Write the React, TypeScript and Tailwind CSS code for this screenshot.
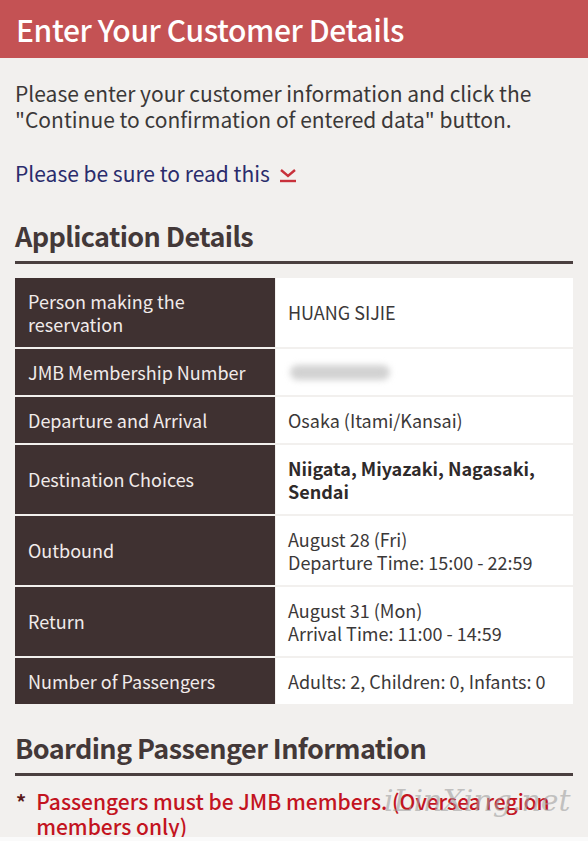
import React from "react";

const font = { fontFamily: '"Noto Sans CJK JP", "Noto Sans", sans-serif' };

const rows: { label: string; value: React.ReactNode; tall?: boolean }[] = [
  { label: "Person making the reservation", value: "HUANG SIJIE", tall: true },
  {
    label: "JMB Membership Number",
    value: (
      <div className="relative h-[22px] w-[110px]">
        <div className="absolute left-[2px] top-[4px] h-[15px] w-[100px] rounded-full bg-[#d2d2d2] blur-[3px]" />
      </div>
    ),
  },
  { label: "Departure and Arrival", value: "Osaka (Itami/Kansai)" },
  {
    label: "Destination Choices",
    value: <span className="font-bold text-[#2f2a2a]">Niigata, Miyazaki, Nagasaki, Sendai</span>,
    tall: true,
  },
  {
    label: "Outbound",
    value: (
      <>
        August 28 (Fri)
        <br />
        Departure Time: 15:00 - 22:59
      </>
    ),
    tall: true,
  },
  {
    label: "Return",
    value: (
      <>
        August 31 (Mon)
        <br />
        Arrival Time: 11:00 - 14:59
      </>
    ),
    tall: true,
  },
  { label: "Number of Passengers", value: "Adults: 2, Children: 0, Infants: 0" },
];

export default function App() {
  return (
    <div className="w-[588px] h-[841px] overflow-hidden bg-[#f2f0ee] flex flex-col" style={font}>
      <div className="h-[837px] overflow-hidden relative">
        <div className="h-[58px] bg-[#c45254] flex items-center px-[16px]">
          <h1 className="text-[30px] font-medium text-white tracking-[-0.4px] leading-none">
            Enter Your Customer Details
          </h1>
        </div>
        <div className="px-[15px]">
          <p className="mt-[22px] text-[21px] leading-[26px] text-[#3b3838]">
            Please enter your customer information and click the "Continue to confirmation of entered data" button.
          </p>
          <div className="mt-[28px] flex items-center gap-[8px] text-[21px] leading-[26px] text-[#2a2c6c]">
            <span>Please be sure to read this</span>
            <svg width="20" height="18" viewBox="0 0 20 18" className="mt-[4px]">
              <polyline points="3,4 10,10 17,4" fill="none" stroke="#c8313b" strokeWidth="2.4" />
              <line x1="2" y1="15" x2="18" y2="15" stroke="#c8313b" strokeWidth="2.4" />
            </svg>
          </div>
          <h2 className="mt-[33px] text-[27px] font-bold leading-[34px] text-[#433838] tracking-[-0.6px]">
            Application Details
          </h2>
          <div className="mt-[8px] h-[3px] bg-[#4a3f3f]" />
          <div className="mt-[14px] flex flex-col gap-[2px] text-[18px] leading-[23px]">
            {rows.map((r, i) => (
              <div key={i} className={`grid grid-cols-[260px_1fr] gap-[1px] ${r.tall ? "h-[69px]" : "h-[46px]"}`}>
                <div className="bg-[#3f3131] text-[#f1ebea] flex items-center pl-[13px] pr-[6px]">
                  <div>{r.label}</div>
                </div>
                <div className="bg-white text-[#3b3838] flex items-center pl-[12px] pr-[10px]">
                  <div>{r.value}</div>
                </div>
              </div>
            ))}
          </div>
          <h2 className="mt-[27px] text-[27px] font-bold leading-[34px] text-[#433838] tracking-[-0.6px]">
            Boarding Passenger Information
          </h2>
          <div className="mt-[8px] h-[3px] bg-[#4a3f3f]" />
          <div className="mt-[13px] flex gap-[10px] text-[21px] leading-[25px] font-medium text-[#c3141f]">
            <span className="text-[#5a1a1a] text-[20px] leading-[25px] pl-[1px] font-bold">*</span>
            <span>Passengers must be JMB members. (Oversea region members only)</span>
          </div>
        </div>
        <div
          className="absolute left-[384px] top-[778px] text-[30px] italic text-[#a0a0a0]/60"
          style={{ fontFamily: '"DejaVu Serif", serif' }}
        >
          iLinXing.net
        </div>
      </div>
      <div className="flex-1 bg-[#fafafa]" />
    </div>
  );
}
